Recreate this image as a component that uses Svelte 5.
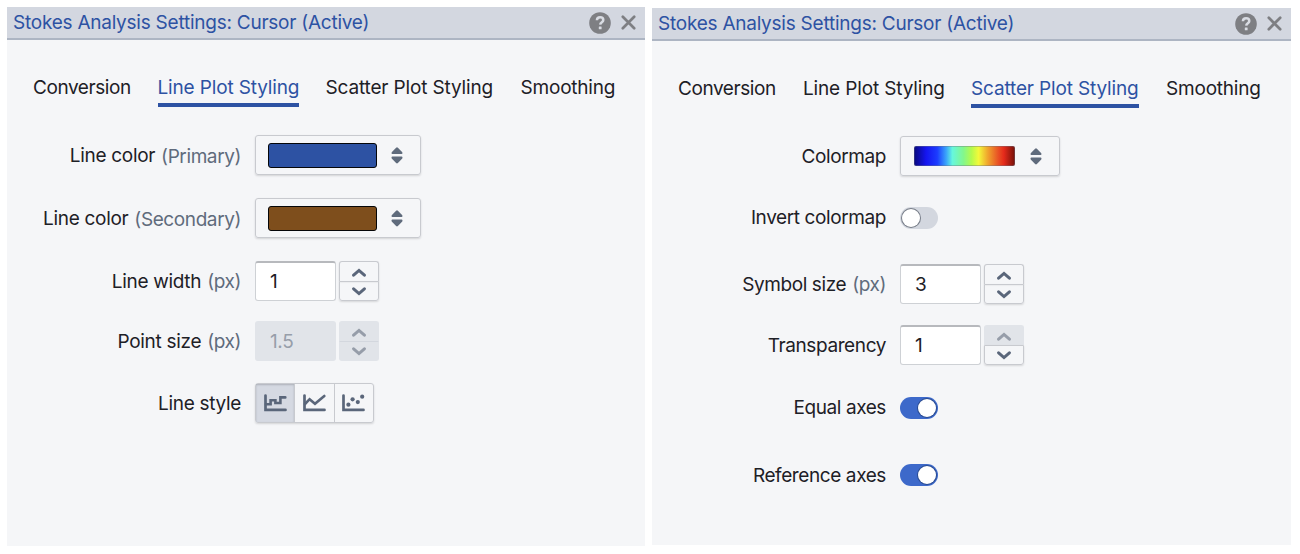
<script>
  const tabs = ['Conversion', 'Line Plot Styling', 'Scatter Plot Styling', 'Smoothing'];
  const title = 'Stokes Analysis Settings: Cursor (Active)';
  const panels = [
    {
      side: 'left',
      active: 1,
      rows: [
        { label: 'Line color', info: '(Primary)', kind: 'color', value: '#2d52a3', low: true },
        { label: 'Line color', info: '(Secondary)', kind: 'color', value: '#7e4e1c', low: true },
        { label: 'Line width', info: '(px)', kind: 'number', value: '1' },
        { label: 'Point size', info: '(px)', kind: 'number', value: '1.5', disabled: true },
        { label: 'Line style', kind: 'style' }
      ]
    },
    {
      side: 'right',
      active: 2,
      rows: [
        { label: 'Colormap', kind: 'map' },
        { label: 'Invert colormap', kind: 'switch', on: false },
        { label: 'Symbol size', info: '(px)', kind: 'number', value: '3' },
        { label: 'Transparency', kind: 'number', value: '1', max: true },
        { label: 'Equal axes', kind: 'switch', on: true },
        { label: 'Reference axes', kind: 'switch', on: true }
      ]
    }
  ];
</script>

{#snippet sorter()}
  <svg class="sorter" width="12" height="17" viewBox="0 0 12 17">
    <path d="M5.1.7Q6 0 6.9.7L11.3 5.2Q12 7 10.7 7H1.3Q0 7 .7 5.2ZM5.1 16.1Q6 16.8 6.9 16.1L11.3 11.6Q12 9.6 10.7 9.6H1.3Q0 9.6 .7 11.6Z" />
  </svg>
{/snippet}

<main>
  {#each panels as panel}
    <section class="panel {panel.side}">
      <header>
        <h1>{title}</h1>
        <svg class="help" width="22" height="22" viewBox="0 0 22 22">
          <circle cx="11" cy="11" r="10.8" />
          <path d="M7.9 8.2C8 6.4 9.2 5.3 11.1 5.3C13 5.3 14.3 6.4 14.3 8C14.3 10.3 11.4 10.1 11.2 12.7" />
          <rect x="9.8" y="14.5" width="2.8" height="2.8" rx=".5" />
        </svg>
        <svg class="close" width="15" height="15" viewBox="0 0 15 15"><path d="M1.8 1.8 13.2 13.2M13.2 1.8 1.8 13.2" /></svg>
      </header>
      <nav>
        {#each tabs as tab, i}
          <span class="tab" class:active={i === panel.active}>{tab}</span>
        {/each}
      </nav>
      <div class="rows">
        {#each panel.rows as row}
          <div class="row">
            <div class="label">{row.label}{#if row.info}<span class="info" class:low={row.low}>{row.info}</span>{/if}</div>
            {#if row.kind === 'color'}
              <div class="select color"><i class="swatch" style="background: {row.value}"></i>{@render sorter()}</div>
            {:else if row.kind === 'map'}
              <div class="select map"><i class="gradient"></i>{@render sorter()}</div>
            {:else if row.kind === 'switch'}
              <div class="switch" class:on={row.on}><i></i></div>
            {:else if row.kind === 'number'}
              <div class="field" class:off={row.disabled}>{row.value}</div>
              <div class="steps">
                <div class="step" class:off={row.disabled || row.max}>
                  <svg width="14" height="9" viewBox="0 0 14 9"><path d="M1.6 7.2 7 2.4 12.4 7.2" /></svg>
                </div>
                <div class="step" class:off={row.disabled}>
                  <svg width="14" height="9" viewBox="0 0 14 9"><path d="M1.6 1.8 7 6.6 12.4 1.8" /></svg>
                </div>
              </div>
            {:else}
              <div class="group">
                <div class="option chosen">
                  <svg width="23" height="18" viewBox="0 0 23 18"><path class="axis" d="M1.5 1.5V15.9H21.5" /><path d="M2 10.2H6.6V6.3H11.4V9H16.4V3.4H21.3" /></svg>
                </div>
                <div class="option">
                  <svg width="23" height="18" viewBox="0 0 23 18"><path class="axis" d="M1.5 1.5V15.9H21.5" /><path d="M2 10 6.6 5.2 12 9.7 21.3 2" /></svg>
                </div>
                <div class="option">
                  <svg width="23" height="18" viewBox="0 0 23 18"><path class="axis" d="M1.5 1.5V15.9H21.5" /><g><circle cx="6.4" cy="10.7" r="2.1" /><circle cx="10.6" cy="5.3" r="2.1" /><circle cx="15.8" cy="8.1" r="2.1" /><circle cx="20.2" cy="2.7" r="2.1" /></g></svg>
                </div>
              </div>
            {/if}
          </div>
        {/each}
      </div>
    </section>
  {/each}
</main>

<style>
  :global(body) { background: #fff; }
  main {
    box-sizing: border-box;
    height: 554px;
    padding: 7px 9px 0 7px;
    display: flex;
    align-items: flex-start;
    gap: 7px;
    overflow: hidden;
    font: 19px/24px Inter, "Liberation Sans", sans-serif;
    letter-spacing: -0.4px;
    color: #1d2026;
    white-space: nowrap;
  }
  .panel { width: 638px; height: 539px; background: #f5f6f8; }
  .right { width: 639px; height: 537px; margin-top: 1px; }
  header {
    box-sizing: border-box;
    height: 33px;
    display: flex;
    align-items: center;
    padding: 0 9px 0 6px;
    background: #d3d7e0;
    border-bottom: 2px solid #adb5c3;
  }
  h1 { margin: 0; flex: 1; font-size: 19px; font-weight: 400; color: #2d52a3; letter-spacing: -0.24px; }
  .help { fill: #7e7f83; margin-right: 10px; }
  .help path { fill: none; stroke: #d9dce3; stroke-width: 2.5; }
  .help rect { fill: #d9dce3; }
  .close { stroke: #7e7f83; stroke-width: 2.7; stroke-linecap: round; }
  nav {
    display: grid;
    grid-template-columns: 98px 141px 168px 96px;
    column-gap: 27px;
    padding: 34px 0 0 26px;
  }
  .left nav { grid-template-columns: 97.5px 141px 168px 96px; }
  .tab { height: 29px; border-bottom: 4px solid transparent; line-height: 27px; letter-spacing: -0.15px; }
  .tab:first-child { letter-spacing: -0.42px; }
  .tab:last-child { letter-spacing: -0.2px; }
  .active { color: #2d52a3; border-color: #2d52a3; }
  .rows { display: flex; flex-direction: column; padding-top: 28px; }
  .row { display: flex; align-items: center; height: 40px; margin-bottom: 23px; }
  .left .row:nth-child(3) { margin-bottom: 20px; }
  .left .row:nth-child(4) { margin-bottom: 22px; }
  .right .row:nth-child(1) { margin-bottom: 22px; }
  .right .row:nth-child(2) { margin-bottom: 26px; }
  .right .row:nth-child(3) { margin-bottom: 21px; }
  .right .row:nth-child(5) { margin-bottom: 27px; }
  .label { width: 234px; margin-right: 14px; padding-top: 2px; text-align: right; }
  .left .label { letter-spacing: -0.31px; }
  .right .row:nth-child(2) .label, .right .row:nth-child(5) .label { padding-top: 0; }
  .info { margin-left: 6px; color: #5f6b7c; letter-spacing: -0.4px; }
  .low { position: relative; top: 1px; }
  .select {
    box-sizing: border-box;
    height: 40px;
    display: flex;
    align-items: center;
    border: 1.5px solid #c8cacf;
    border-radius: 3px;
    box-shadow: 0 1px 2px #11141826;
  }
  .color { width: 166px; padding-left: 12px; gap: 14px; }
  .map { width: 160px; padding-left: 13px; gap: 15px; }
  .swatch { box-sizing: border-box; width: 109px; height: 25px; border: 1.5px solid #050608; border-radius: 3px; }
  .gradient {
    box-sizing: border-box;
    width: 101px;
    height: 20px;
    border: 1px solid #6c718066;
    border-radius: 2px;
    background: linear-gradient(90deg, #08087c, #1515f0 12%, #1c3cff 23%, #3ba6fa 32%, #66f7dd 38%, #83f78c 49%, #b5fa4c 57%, #f3f93a 64%, #f0a52d 73%, #e95425 83%, #e52a1b 89%, #731008) border-box;
  }
  .sorter { fill: #5f6b7c; }
  .field {
    box-sizing: border-box;
    width: 81px;
    height: 40px;
    padding-left: 14px;
    border: 1px solid #ced1d5;
    border-top: 2px solid #b7b9bd;
    border-radius: 3px;
    background: #fff;
    line-height: 37px;
  }
  .field.off { background: #e1e4e9; border-color: #e1e4e9; color: #979eaa; }
  .steps { display: flex; flex-direction: column; width: 40px; height: 40px; margin-left: 3px; }
  .step {
    box-sizing: border-box;
    height: 20px;
    display: flex;
    align-items: center;
    justify-content: center;
    border: 1px solid #c8cacf;
    border-bottom: 0;
    border-radius: 3px 3px 0 0;
    box-shadow: 0 1px 2px #11141822;
  }
  .step + .step { border-bottom: 1px solid #c8cacf; border-radius: 0 0 3px 3px; }
  .step:first-child svg { margin-top: 2px; }
  .step.off { border-color: #e1e4e9; background: #e1e4e9; box-shadow: none; }
  .step.off + .step.off { border-color: #d3d7de #e1e4e9 #e1e4e9; }
  .step svg, .option svg { fill: none; stroke: #5a667a; stroke-width: 3; stroke-linecap: round; }
  .step.off svg { stroke: #969da9; }
  .switch { box-sizing: border-box; width: 38px; height: 22px; padding: 2px; display: flex; border-radius: 11px; background: #d3d7df; }
  .switch i { box-sizing: border-box; width: 18px; height: 18px; border-radius: 50%; background: #fff; box-shadow: 0 0 0 1px #777d88; }
  .switch.on { justify-content: flex-end; background: #3d69ca; }
  .switch.on i { box-shadow: 0 0 0 1px #294b91; }
  .group { box-sizing: border-box; display: flex; width: 119px; height: 40px; border: 1px solid #c8cacf; border-radius: 3px; box-shadow: 0 1px 2px #11141826; }
  .option { flex: 1; display: flex; align-items: center; justify-content: center; }
  .option + .option { border-left: 1px solid #c8cacf; }
  .chosen { background: #d5d9e2; box-shadow: inset 0 1px 2px #11141833; }
  .option svg { stroke-width: 2.6; }
  .option .axis { stroke-width: 2.7; }
  .option g { fill: #5a667a; stroke: none; }
</style>
